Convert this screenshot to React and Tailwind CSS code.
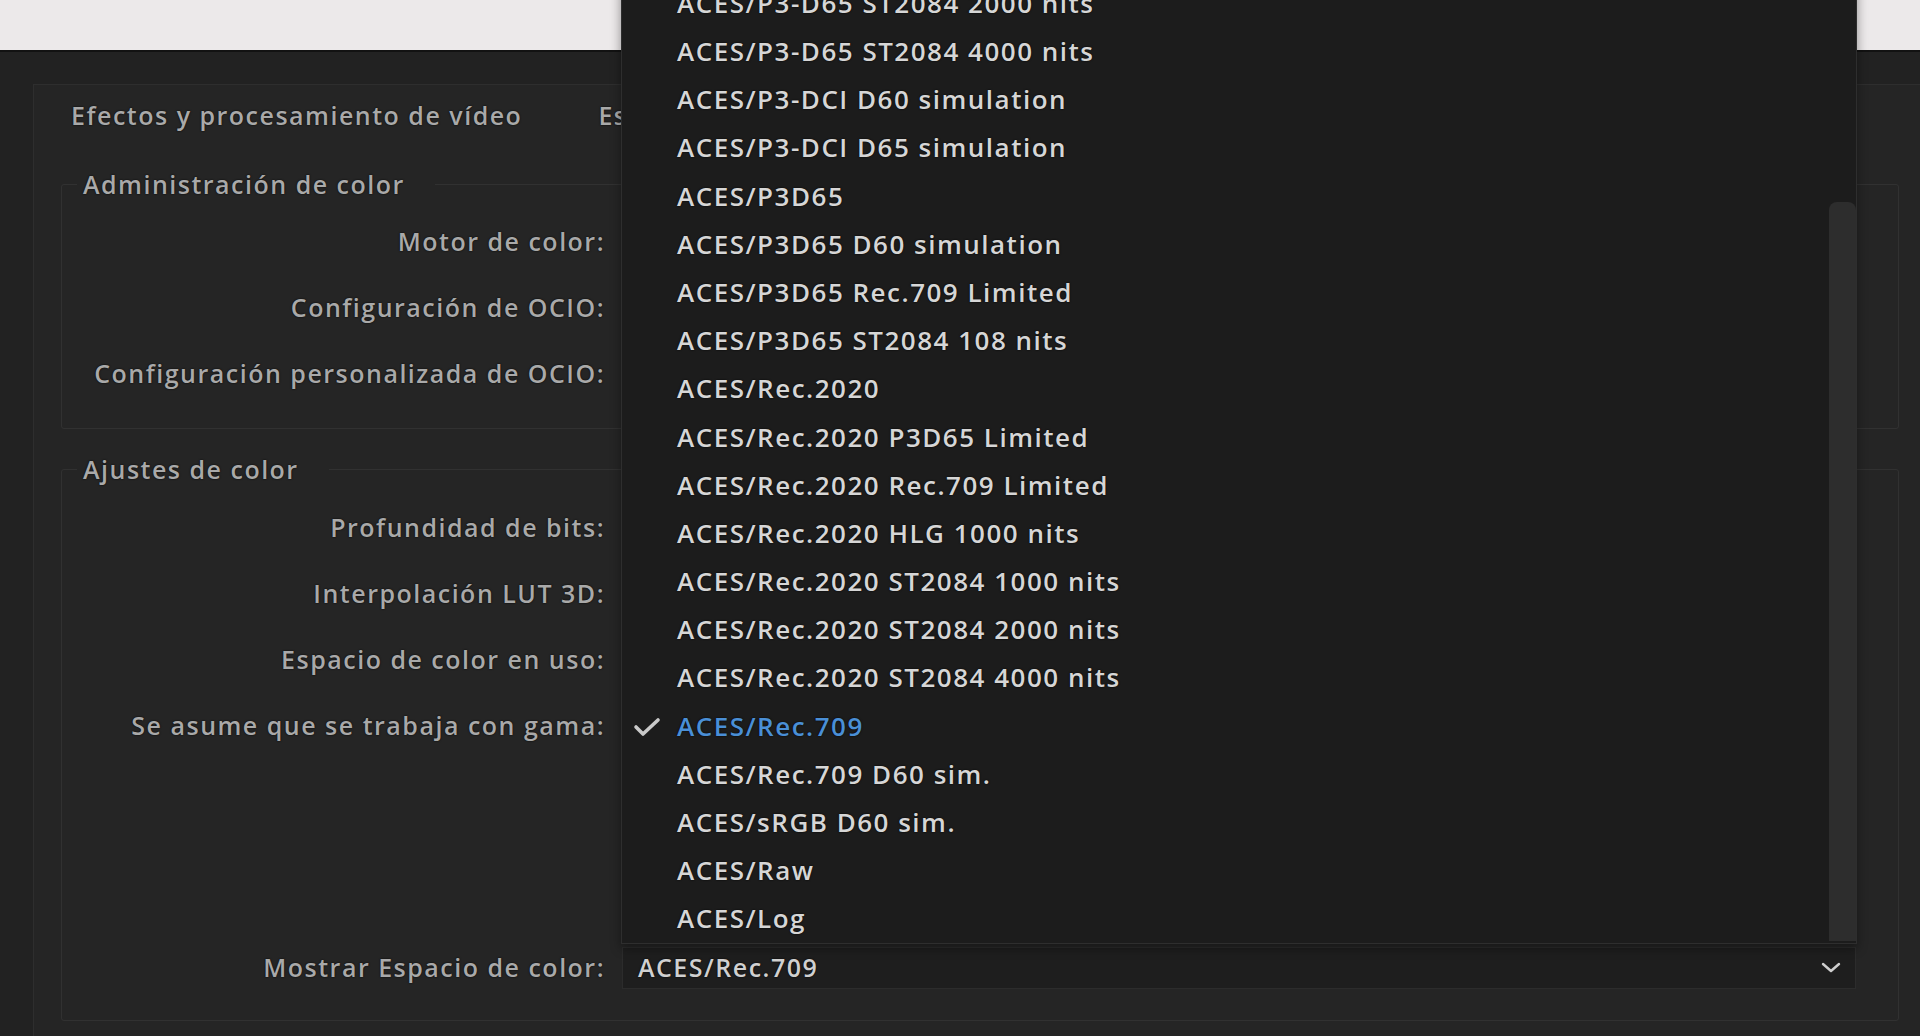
import React from "react";

const options = [
  "ACES/P3-D65 ST2084 2000 nits",
  "ACES/P3-D65 ST2084 4000 nits",
  "ACES/P3-DCI D60 simulation",
  "ACES/P3-DCI D65 simulation",
  "ACES/P3D65",
  "ACES/P3D65 D60 simulation",
  "ACES/P3D65 Rec.709 Limited",
  "ACES/P3D65 ST2084 108 nits",
  "ACES/Rec.2020",
  "ACES/Rec.2020 P3D65 Limited",
  "ACES/Rec.2020 Rec.709 Limited",
  "ACES/Rec.2020 HLG 1000 nits",
  "ACES/Rec.2020 ST2084 1000 nits",
  "ACES/Rec.2020 ST2084 2000 nits",
  "ACES/Rec.2020 ST2084 4000 nits",
  "ACES/Rec.709",
  "ACES/Rec.709 D60 sim.",
  "ACES/sRGB D60 sim.",
  "ACES/Raw",
  "ACES/Log",
];

const selected = "ACES/Rec.709";

function Row({ label, children }) {
  return (
    <div className="flex items-center h-[42px]">
      <div className="w-[543px] shrink-0 text-right text-[25px] font-semibold tracking-[1.5px] text-[#a9a9a9] whitespace-nowrap [text-shadow:0_0_2px_#000]">{label}</div>
      <div className="ml-[17px] flex-1 h-[42px]">{children}</div>
    </div>
  );
}

function Group({ title, children, className }) {
  return (
    <fieldset className={"border border-[#313131] rounded-[3px] mr-[21px] ml-[27px] px-0 pr-[42px] " + className}>
      <legend className="ml-[15px] pl-[6px] pr-[30px] h-[30px] leading-[30px] text-[25px] font-semibold tracking-[1.5px] text-[#a9a9a9] [text-shadow:0_0_2px_#000]">{title}</legend>
      {children}
    </fieldset>
  );
}

export default function App() {
  return (
    <div className="relative w-[1920px] h-[1036px] overflow-hidden bg-[#222222] font-['Open_Sans',sans-serif]">
      <div className="h-[52px] bg-[#ece9ea] border-b-2 border-[#121212]" />

      <div className="ml-[33px] mt-[32px] border-l border-t border-[#2e2e2e] bg-[#252525] h-[960px]">
        <div className="h-[62px] flex items-center pl-[37px] gap-[76px] text-[25px] font-semibold tracking-[1.5px] text-[#a9a9a9] [text-shadow:0_0_2px_#000]">
          <span>Efectos y procesamiento de vídeo</span>
          <span>Es</span>
        </div>

        <Group title="Administración de color" className="mt-[22px] pt-[22px] pb-[33px]">
          <div className="flex flex-col gap-[24px]">
            <Row label="Motor de color:" />
            <Row label="Configuración de OCIO:" />
            <Row label="Configuración personalizada de OCIO:" />
          </div>
        </Group>

        <Group title="Ajustes de color" className="mt-[25px] pt-[23px] pb-[31px]">
          <div className="flex flex-col gap-[24px]">
            <Row label="Profundidad de bits:" />
            <Row label="Interpolación LUT 3D:" />
            <Row label="Espacio de color en uso:" />
            <Row label="Se asume que se trabaja con gama:" />
          </div>
          <div className="mt-[200px]">
            <Row label="Mostrar Espacio de color:">
              <div className="h-[42px] flex items-center justify-between border border-[#2c2c2c] bg-[#1e1e1e] pl-[15px] pr-[14px] text-[25px] font-semibold tracking-[1.5px] text-[#d0d0d0] [text-shadow:0_0_2px_#000]">
                <span>ACES/Rec.709</span>
                <svg width="20" height="12" viewBox="0 0 20 12" fill="none">
                  <polyline points="2,2 10,9 18,2" stroke="#cfcfcf" strokeWidth="2.4" strokeLinecap="round" strokeLinejoin="round" />
                </svg>
              </div>
            </Row>
          </div>
        </Group>
      </div>

      {/* open menu */}
      <div className="absolute left-[621px] bottom-[92px] w-[1236px] bg-[#1c1c1c] border-l border-r border-b border-[#2e2e2e] shadow-[0_4px_10px_rgba(0,0,0,0.4)]">
        <div className="flex flex-col">
          {options.map((o) => (
            <div key={o} className="relative h-[48.2px] flex items-center pl-[55px] text-[26px] font-semibold tracking-[1.5px] whitespace-nowrap [text-shadow:0_0_2px_#000]">
              {o === selected && (
                <svg className="absolute left-[10px] top-[13px]" width="30" height="24" viewBox="0 0 30 24" fill="none">
                  <polyline points="4,12 11,19 26,5" stroke="#c9c9c9" strokeWidth="3.6" strokeLinecap="round" strokeLinejoin="round" />
                </svg>
              )}
              <span className={o === selected ? "text-[#4a8fd6]" : "text-[#d6d6d6]"}>{o}</span>
            </div>
          ))}
        </div>
        <div className="absolute right-0 top-[223px] bottom-[2px] w-[27px] rounded-t-[8px] bg-[#2d2d2d]" />
      </div>
    </div>
  );
}
